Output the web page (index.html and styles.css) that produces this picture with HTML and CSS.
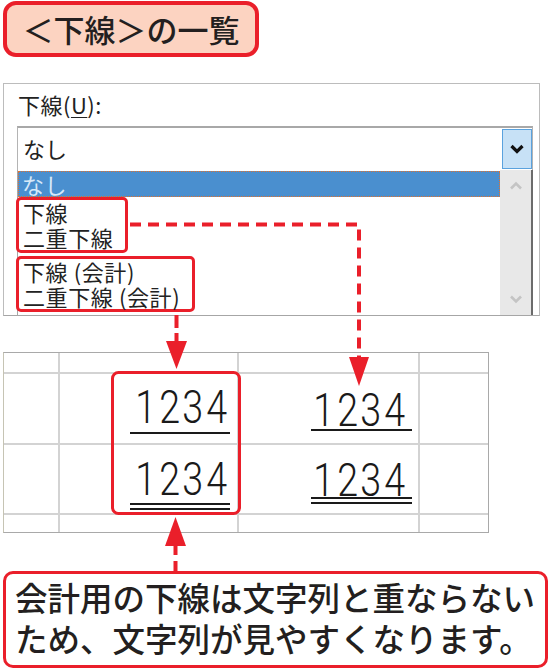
FILE: index.html
```html
<!DOCTYPE html>
<html lang="ja">
<head>
<meta charset="utf-8">
<title>下線の一覧</title>
<link rel="stylesheet" href="styles.css">
</head>
<body>
<div class="page">
  <div class="title">＜下線＞の一覧</div>

  <div class="dialog">
    <div class="label">下線(<span class="ul">U</span>):</div>
    <div class="combo">
      <span class="combo-text">なし</span>
      <span class="combo-btn">
        <svg width="14" height="10" viewBox="0 0 14 10"><path d="M1.5 2 L7 7.5 L12.5 2" fill="none" stroke="#111" stroke-width="3.2" stroke-linejoin="miter"/></svg>
      </span>
    </div>
    <div class="list">
      <div class="items">
        <div class="item selected">なし</div>
        <div class="hl hl1">
          <div class="item">下線</div>
          <div class="item">二重下線</div>
        </div>
        <div class="hl hl2">
          <div class="item">下線 (会計)</div>
          <div class="item">二重下線 (会計)</div>
        </div>
      </div>
      <div class="scroll">
        <svg class="sarrow up" width="14" height="9" viewBox="0 0 14 9"><path d="M2 7.5 L7 2.5 L12 7.5" fill="none" stroke="#c4c4c4" stroke-width="2.6"/></svg>
        <svg class="sarrow down" width="14" height="9" viewBox="0 0 14 9"><path d="M2 1.5 L7 6.5 L12 1.5" fill="none" stroke="#c4c4c4" stroke-width="2.6"/></svg>
      </div>
    </div>
  </div>

  <div class="sheet">
    <div class="cell"></div><div class="cell"></div><div class="cell"></div><div class="cell"></div>
    <div class="cell"></div>
    <div class="cell c2"><span class="num acc1"><span class="d">1</span><span class="d">2</span><span class="d">3</span><span class="d">4</span></span></div>
    <div class="cell c3"><span class="num reg1"><span class="d">1</span><span class="d">2</span><span class="d">3</span><span class="d">4</span></span></div>
    <div class="cell"></div>
    <div class="cell"></div>
    <div class="cell c2"><span class="num acc2"><span class="d">1</span><span class="d">2</span><span class="d">3</span><span class="d">4</span></span></div>
    <div class="cell c3"><span class="num reg2"><span class="d">1</span><span class="d">2</span><span class="d">3</span><span class="d">4</span></span></div>
    <div class="cell"></div>
    <div class="cell"></div><div class="cell"></div><div class="cell"></div><div class="cell"></div>
  </div>

  <div class="callout">会計用の下線は文字列と重ならない<br>ため、文字列が見やすくなります。</div>

  <svg class="overlay" width="550" height="671" viewBox="0 0 550 671">
    <path d="M130 224.5 H359 V358" fill="none" stroke="#ea1f2a" stroke-width="4" stroke-dasharray="11 7"/>
    <polygon points="349,357 369,357 359,386" fill="#ea1f2a"/>
    <path d="M176.5 315 V342" fill="none" stroke="#ea1f2a" stroke-width="4" stroke-dasharray="13 5"/>
    <polygon points="166,341 187,341 176.5,369" fill="#ea1f2a"/>
    <rect x="112.5" y="372.5" width="127" height="141" rx="6" fill="none" stroke="#ea1f2a" stroke-width="3"/>
    <polygon points="165,546 186,546 175.5,517" fill="#ea1f2a"/>
    <path d="M175.5 545 V571" fill="none" stroke="#ea1f2a" stroke-width="4" stroke-dasharray="10 6"/>
  </svg>
</div>
</body>
</html>
```

FILE: styles.css
```css
* { box-sizing: border-box; }
html, body { margin: 0; padding: 0; background: #fff; }
body {
  font-family: "Noto Sans CJK JP", "Noto Sans", sans-serif;
  color: #231f20;
}
.page {
  position: relative;
  width: 550px;
  height: 671px;
  overflow: hidden;
}
.title {
  margin: 1px 0 0 3px;
  width: 256px;
  height: 56px;
  border: 4px solid #ea1f2a;
  border-radius: 13px;
  background: #fcd3c1;
  display: flex;
  align-items: center;
  justify-content: center;
  font-size: 31px;
  font-weight: 500;
  line-height: 1;
  color: #231f20;
  padding-bottom: 2px;
}
.dialog {
  margin: 26px 0 0 3px;
  width: 537px;
  height: 233px;
  border: 1px solid #bcbcbc;
  border-bottom-color: #a6a6a6;
  overflow: hidden;
  font-size: 22px;
  color: #222;
}
.label {
  padding: 5px 0 0 14px;
  line-height: 30px;
  height: 42px;
  letter-spacing: 0.5px;
}
.ul { text-decoration: underline; text-underline-offset: 3px; text-decoration-thickness: 1px; }
.combo {
  margin-left: 13px;
  width: 516px;
  height: 44px;
  border: 1px solid #b4b4b4;
  border-top: 2px solid #a8a8a8;
  border-bottom: none;
  display: flex;
  align-items: stretch;
}
.combo-text {
  flex: 1;
  padding-left: 5px;
  line-height: 40px;
}
.combo-btn {
  width: 30px;
  margin: 1px 0 1px 0;
  background: #c7e1f6;
  border: 1px solid #5aa2de;
  display: flex;
  align-items: center;
  justify-content: center;
}
.list {
  margin-left: 13px;
  width: 516px;
  height: 150px;
  border-left: 1px solid #a6a6a6;
  border-right: 2px solid #6b6b6b;
  display: flex;
}
.items { flex: 1; }
.item {
  line-height: 25px;
  height: 25px;
  white-space: nowrap;
  letter-spacing: 0.6px;
}
.selected {
  margin-top: 1px;
  height: 26px;
  line-height: 26px;
  background: #4a8fcf;
  color: #d6e8f8;
  padding-left: 4px;
  outline: 1px dotted #e0712e;
  outline-offset: -1px;
}
.hl {
  margin-left: -2px;
  border: 3px solid #ea1f2a;
  border-radius: 5px;
  padding-left: 4px;
}
.hl1 { width: 112px; height: 56px; }
.hl2 { width: 179px; height: 56px; margin-top: 3px; }
.scroll {
  width: 31px;
  background: #e8e8e8;
  display: flex;
  flex-direction: column;
  align-items: center;
  padding-top: 11px;
}
.sarrow.down { margin-top: 105px; }

.sheet {
  margin: 36px 0 0 3px;
  display: grid;
  grid-template-columns: 54px 177px 179px 68px;
  grid-template-rows: 19px 69px 68px 17px;
  gap: 2px;
  background: #d3d3d3;
  border: 1px solid #a9a9a9;
  border-left-color: #c6c4b4;
  width: 486px;
}
.cell {
  background: #fff;
  display: flex;
  justify-content: flex-end;
  align-items: flex-start;
}
.c2 { padding-right: 7px; }
.c3 { padding-right: 6px; }
.num {
  font-family: "Roboto", "DejaVu Sans", sans-serif;
  font-weight: 300;
  font-size: 47px;
  line-height: 34px;
  color: #1a1a1a;
  display: flex;
  padding: 0 3px;
}
.d {
  display: inline-block;
  width: 23.5px;
  text-align: center;
  transform: scaleX(0.8);
}
.acc1 { margin-top: 16px; padding-bottom: 8px; border-bottom: 2px solid #1a1a1a; }
.reg1 { margin-top: 19px; padding: 0 7px 2px 0; border-bottom: 2px solid #1a1a1a; }
.acc2 { margin-top: 17px; padding-bottom: 7px; border-bottom: 7px double #1a1a1a; }
.reg2 { margin-top: 18px; padding: 0 7px 0 0; border-bottom: 7px double #1a1a1a; }

.callout {
  margin: 38px 0 0 3px;
  width: 545px;
  height: 97px;
  border: 3px solid #ea1f2a;
  border-radius: 10px;
  background: #fff;
  padding: 2px 0 0 9px;
  font-size: 32.5px;
  line-height: 41px;
  font-weight: 500;
  color: #231f20;
  white-space: nowrap;
}
.overlay {
  position: absolute;
  left: 0;
  top: 0;
  pointer-events: none;
}
```
